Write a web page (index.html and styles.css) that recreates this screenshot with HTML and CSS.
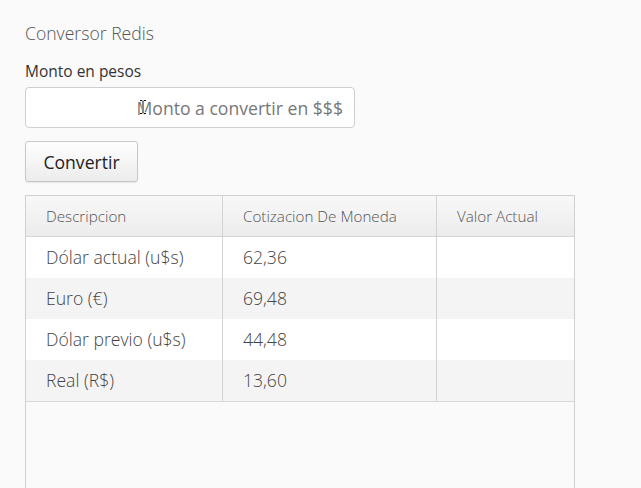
FILE: index.html
```html
<!DOCTYPE html>
<html lang="es">
<head>
<meta charset="utf-8">
<title>Conversor Redis</title>
<link rel="stylesheet" href="styles.css">
</head>
<body>
<main class="page">
  <h1 class="title">Conversor Redis</h1>
  <label class="label" for="monto">Monto en pesos</label>
  <div class="field">
    <input class="input" id="monto" type="text" placeholder="Monto a convertir en $$$">
    <svg class="ibeam" width="8" height="16" viewBox="0 0 8 16" aria-hidden="true">
      <path d="M1 1.5h2l1 1 1-1h2M4 2.5v11M1 14.5h2l1-1 1 1h2" fill="none" stroke="#fff" stroke-width="2.4"/>
      <path d="M1 1.5h2l1 1 1-1h2M4 2.5v11M1 14.5h2l1-1 1 1h2" fill="none" stroke="#111" stroke-width="1"/>
    </svg>
  </div>
  <button class="btn" type="button">Convertir</button>
  <div class="grid">
    <div class="grid-head">
      <div class="cell">Descripcion</div>
      <div class="cell">Cotizacion De Moneda</div>
      <div class="cell last">Valor Actual</div>
    </div>
    <div class="row">
      <div class="cell">Dólar actual (u$s)</div>
      <div class="cell">62,36</div>
      <div class="cell last"></div>
    </div>
    <div class="row alt">
      <div class="cell">Euro (€)</div>
      <div class="cell">69,48</div>
      <div class="cell last"></div>
    </div>
    <div class="row">
      <div class="cell">Dólar previo (u$s)</div>
      <div class="cell">44,48</div>
      <div class="cell last"></div>
    </div>
    <div class="row alt end">
      <div class="cell">Real (R$)</div>
      <div class="cell">13,60</div>
      <div class="cell last"></div>
    </div>
  </div>
</main>
</body>
</html>
```
FILE: styles.css
```css
* { box-sizing: border-box; }
html, body { margin: 0; padding: 0; }
body {
  background: #fafafa;
  font-family: "Open Sans", "Liberation Sans", sans-serif;
  color: #333;
  overflow: hidden;
  height: 488px;
}
.page {
  padding: 22px 0 0 25px;
  display: flex;
  flex-direction: column;
  align-items: flex-start;
}
.title {
  margin: 0;
  font-size: 17.6px;
  font-weight: 300;
  line-height: 22px;
  color: #555;
}
.label {
  margin-top: 17px;
  font-size: 15.5px;
  line-height: 20px;
  color: #333;
}
.field {
  position: relative;
  margin-top: 6px;
}
.input {
  display: block;
  width: 330px;
  height: 41px;
  border: 1px solid #cfcfcf;
  border-radius: 4px;
  background: #fff;
  padding: 0 11px;
  text-align: right;
  font-family: inherit;
  font-size: 17.6px;
  color: #333;
  outline: none;
}
.input::placeholder { color: #777; opacity: 1; }
.ibeam {
  position: absolute;
  left: 114px;
  top: 12px;
}
.btn {
  margin-top: 13px;
  width: 113px;
  height: 41px;
  border: 1px solid #c8c8c8;
  border-radius: 3px;
  background: linear-gradient(#fefefe, #ececec);
  box-shadow: 0 1px 1px rgba(0,0,0,0.08);
  font-family: inherit;
  font-size: 17.6px;
  color: #222;
  padding: 0;
}
.grid {
  margin-top: 13px;
  width: 550px;
  height: 300px;
  border: 1px solid #d0d0d0;
  border-bottom: 0;
  background: #fafafa;
}
.grid-head, .row {
  display: grid;
  grid-template-columns: 197px 214px 137px;
}
.grid-head {
  height: 41px;
  background: linear-gradient(#f8f8f8, #ececec);
  border-bottom: 1px solid #d3d3d3;
  font-size: 15.2px;
  font-weight: 300;
  color: #555;
}
.row {
  height: 41px;
  background: #fff;
  font-size: 17.6px;
  font-weight: 300;
  color: #444;
}
.row.alt { background: #f4f4f4; }
.row.end { height: 42px; border-bottom: 1px solid #d8d8d8; }
.cell {
  display: flex;
  align-items: center;
  padding-left: 20px;
  padding-bottom: 1px;
  border-right: 1px solid #d3d3d3;
  white-space: nowrap;
}
.cell.last { border-right: 0; }
```
